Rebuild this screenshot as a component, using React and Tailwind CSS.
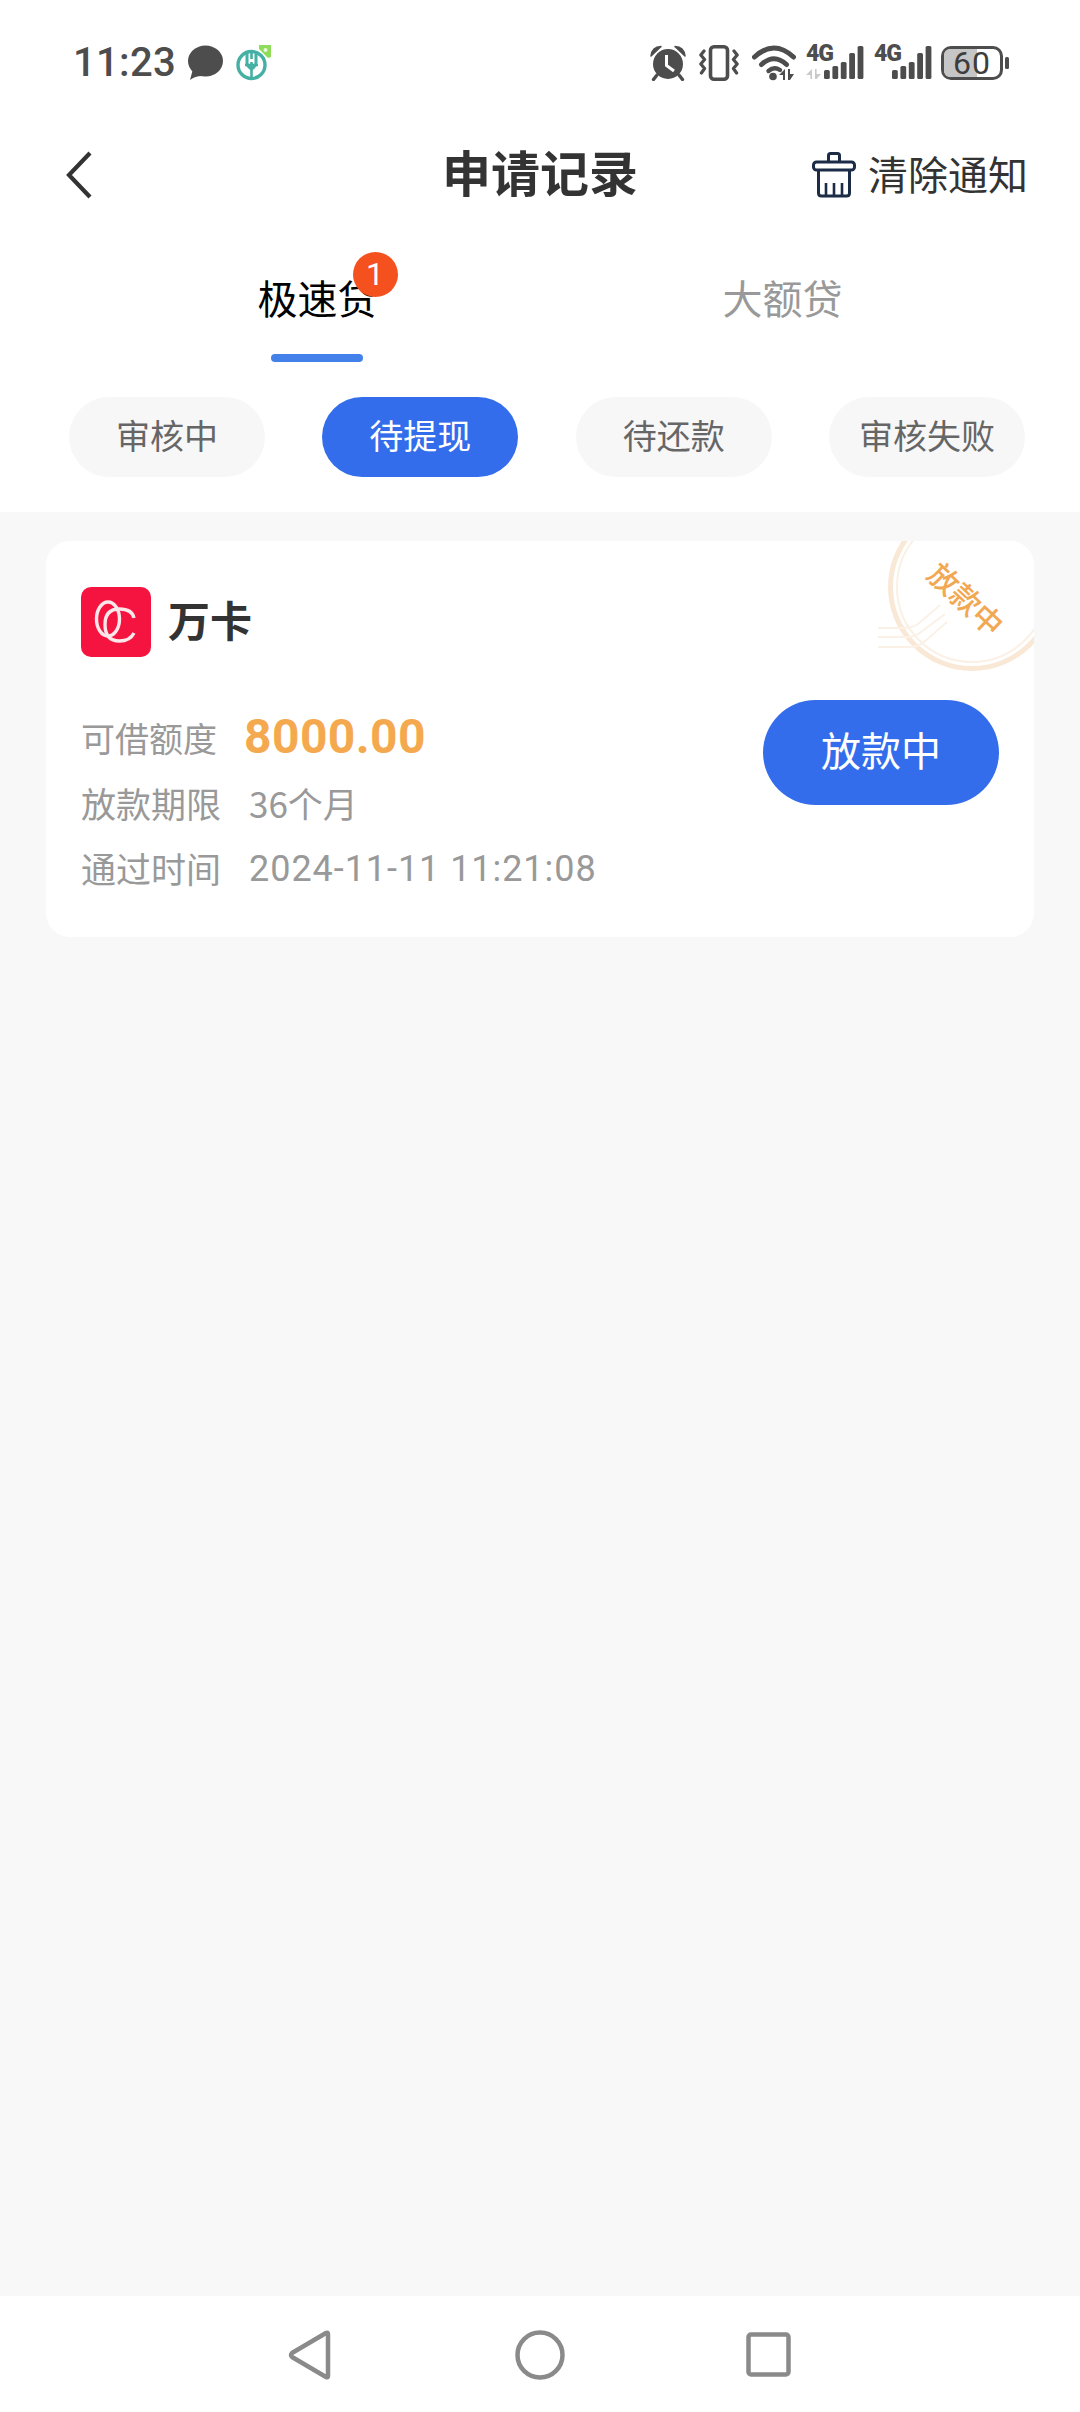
import React from "react";

const CJK = '"Noto Sans CJK SC", "Noto Sans", sans-serif';

function ChatIcon() {
  return (
    <svg width="36" height="36" viewBox="0 0 36 36" className="shrink-0">
      <ellipse cx="18.5" cy="16" rx="17.5" ry="15.5" fill="#4d4d4d" />
      <path d="M3 35 L6 24 L15 31 Q8 31 3 35 Z" fill="#4d4d4d" />
    </svg>
  );
}

function BankIcon() {
  return (
    <svg width="36" height="36" viewBox="0 0 36 36" className="shrink-0">
      <circle cx="15.5" cy="20" r="13.5" fill="none" stroke="#45b0a4" strokeWidth="3.4" />
      <path d="M11 6 V18 Q11 21 15.5 24 Q20 21 20 18 V6" fill="none" stroke="#45b0a4" strokeWidth="3" />
      <path d="M15.5 5 V14 M9 20 H22 M15.5 17 V34" stroke="#45b0a4" strokeWidth="2.6" />
      <path d="M23 0 H35 V12 L32 13 L23 4 Z" fill="#8fdc5a" />
      <circle cx="29.5" cy="5" r="2" fill="#e8f8df" />
    </svg>
  );
}

function AlarmIcon() {
  return (
    <svg width="36" height="36" viewBox="0 0 36 36" className="shrink-0">
      <circle cx="18" cy="19" r="15" fill="#4d4d4d" />
      <path d="M1 11 Q2 2 11 1.5 Z M35 11 Q34 2 25 1.5 Z" fill="#4d4d4d" stroke="#4d4d4d" strokeWidth="1.5" strokeLinejoin="round" />
      <path d="M7 30 L3.5 34.5 M29 30 L32.5 34.5" stroke="#4d4d4d" strokeWidth="3.4" strokeLinecap="round" />
      <path d="M16.5 10 V20.5 L24 26" fill="none" stroke="#fff" strokeWidth="3" />
    </svg>
  );
}

function VibrateIcon() {
  return (
    <svg width="40" height="36" viewBox="0 0 40 36" className="shrink-0">
      <rect x="11.5" y="1.8" width="17" height="32.4" rx="3.5" fill="none" stroke="#4d4d4d" strokeWidth="3.6" />
      <path d="M5 6 L1.8 10 L5.6 14.5 L1.8 19 L5.6 23.5 L2.4 28 M35 6 L38.2 10 L34.4 14.5 L38.2 19 L34.4 23.5 L37.6 28" fill="none" stroke="#4d4d4d" strokeWidth="3.2" strokeLinejoin="round" strokeLinecap="round" />
    </svg>
  );
}

function WifiIcon() {
  return (
    <svg width="45" height="36" viewBox="0 0 45 36" className="shrink-0">
      <path d="M2.5 12 Q22 -6 41.5 12" fill="none" stroke="#4d4d4d" strokeWidth="5" strokeLinecap="round" />
      <path d="M9.5 19.5 Q22 8 34.5 19.5" fill="none" stroke="#4d4d4d" strokeWidth="5" strokeLinecap="round" />
      <path d="M16.5 26 Q22 21 28 25" fill="none" stroke="#4d4d4d" strokeWidth="4.4" strokeLinecap="round" />
      <circle cx="21" cy="31.5" r="3.8" fill="#4d4d4d" />
      <path d="M33 24 V35 H31 V30 L27 30 Z M36 24 L36 35 L38 35 L42 29 L38 29 L38 24 Z" fill="#4d4d4d" />
    </svg>
  );
}

function Bars({ arrows }) {
  const bars = [
    { x: 18, top: 24 },
    { x: 26.4, top: 20 },
    { x: 34.8, top: 16 },
    { x: 43.2, top: 7 },
    { x: 51.6, top: 0 },
  ];
  return (
    <svg width="58" height="34" viewBox="0 0 58 34" className="absolute left-0 top-0">
      {bars.map((b) => (
        <rect key={b.x} x={b.x} y={b.top} width="5.8" height={33 - b.top} rx="1.6" fill="#4d4d4d" />
      ))}
      {arrows && (
        <path d="M6 23 V33 H4.4 V29 L0 29 Z M9 23 V33 L10.6 33 L15 28 L10.6 28 V23 Z" fill="#c9c9c9" />
      )}
    </svg>
  );
}

function Signal({ arrows, width }) {
  return (
    <div className="relative h-[34px] shrink-0" style={{ width }}>
      <div className="absolute bottom-0 right-0 w-[58px] h-[34px]">
        <Bars arrows={arrows} />
      </div>
      <span className="absolute left-0 top-[-4px] text-[23px] leading-[24px] tracking-[-1px] font-black text-[#4d4d4d] font-['Roboto']">4G</span>
    </div>
  );
}

function Battery() {
  return (
    <div className="relative flex items-center w-[68px] h-[34px] shrink-0">
      <div className="relative w-[62px] h-[34px] rounded-[10px] border-[3.5px] border-[#4d4d4d] flex items-center justify-center">
        <div className="absolute left-0 top-0 bottom-0 w-[33px] rounded-l-[6px] bg-[#c6c6c6]" />
        <span className="relative text-[32px] leading-[27px] tracking-[1px] text-[#3d3d3d] font-['Roboto']">60</span>
      </div>
      <div className="ml-[2px] w-[4px] h-[12px] rounded-[1.5px] bg-[#4d4d4d]" />
    </div>
  );
}

function ClearIcon() {
  return (
    <svg width="44" height="46" viewBox="0 0 44 46" className="shrink-0">
      <path d="M16.5 10 V3.5 Q16.5 1.5 18.5 1.5 H25.5 Q27.5 1.5 27.5 3.5 V10" fill="none" stroke="#1d2c46" strokeWidth="3" />
      <rect x="1.5" y="10" width="41" height="8" rx="3" fill="none" stroke="#1d2c46" strokeWidth="3" />
      <path d="M6.5 18 V41 Q6.5 44 9.5 44 H34.5 Q37.5 44 37.5 41 V18" fill="none" stroke="#1d2c46" strokeWidth="3" />
      <path d="M14 31 V44 M22 31 V44 M30 31 V44" stroke="#1d2c46" strokeWidth="2.6" />
    </svg>
  );
}

function Logo() {
  return (
    <div className="w-[70px] h-[70px] rounded-[10px] bg-[#f5143f] shrink-0">
      <svg width="70" height="70" viewBox="0 0 70 70">
        <ellipse cx="27" cy="32" rx="11.5" ry="17" fill="none" stroke="#fbe6ea" strokeWidth="3.4" />
        <path d="M53 31 Q51 22 38.5 22 Q24 22 24 37.5 Q24 54 38.5 54 Q49 54 53 46" fill="none" stroke="#fbe6ea" strokeWidth="3.4" />
      </svg>
    </div>
  );
}

function Stamp() {
  return (
    <div className="absolute right-0 top-0 w-[170px] h-[140px] pointer-events-none">
      <svg width="170" height="140" viewBox="864 542 170 140" className="absolute inset-0">
        <circle cx="972" cy="588" r="81.5" fill="none" stroke="#f9e8d6" strokeWidth="5" />
        <circle cx="972" cy="588" r="75" fill="none" stroke="#fbf0e4" strokeWidth="2" />
        <path d="M878 629 H904 Q912 629 918 625 L940 606 M878 638 H907 Q915 638 921 633 L945 615 M878 648 H910 Q918 648 924 643 L947 623" fill="none" stroke="#fbf1e6" strokeWidth="2" />
      </svg>
      <span
        className="absolute left-[45px] top-[39px] w-[116px] text-center text-[30px] leading-[36px] font-medium text-[#f2a853] rotate-[43deg]"
        style={{ fontFamily: CJK }}
      >
        放款中
      </span>
    </div>
  );
}

const PILLS = [
  { t: "审核中", on: false },
  { t: "待提现", on: true },
  { t: "待还款", on: false },
  { t: "审核失败", on: false },
];

export default function App() {
  return (
    <div className="w-[1080px] h-[2412px] flex flex-col bg-[#f8f8f8] overflow-hidden" style={{ fontFamily: CJK }}>
      <div className="bg-white h-[512px] shrink-0 flex flex-col">
        {/* status bar */}
        <div className="h-[126px] shrink-0 flex items-center pl-[73px] pr-[71px]">
          <span className="text-[40px] leading-[48px] font-medium font-['Roboto'] tracking-[0.3px] text-[#4d4d4d]">11:23</span>
          <div className="ml-[11px]"><ChatIcon /></div>
          <div className="ml-[13px]"><BankIcon /></div>
          <div className="ml-auto flex items-center">
            <AlarmIcon />
            <div className="ml-[13px]"><VibrateIcon /></div>
            <div className="ml-[13px]"><WifiIcon /></div>
            <div className="ml-[9px]"><Signal arrows width={58} /></div>
            <div className="ml-[10px]"><Signal width={58} /></div>
            <div className="ml-[9px]"><Battery /></div>
          </div>
        </div>
        {/* title bar */}
        <div className="h-[98px] shrink-0 grid grid-cols-[1fr_auto_1fr] items-center">
          <div className="pl-[66px] flex items-center">
            <svg width="26" height="48" viewBox="0 0 26 48">
              <path d="M24 2 L3 24 L24 46" fill="none" stroke="#333333" strokeWidth="4.2" />
            </svg>
          </div>
          <div className="text-[49px] leading-[60px] font-bold text-[#333333] pb-[8px]">申请记录</div>
          <div className="flex items-center justify-end pr-[52px]">
            <ClearIcon />
            <span className="ml-[12px] text-[40px] leading-[50px] text-[#333333] pb-[5px]">清除通知</span>
          </div>
        </div>
        {/* tabs */}
        <div className="grid grid-cols-[465px_465px] pl-[85px] pt-[45px] shrink-0">
          <div className="flex flex-col items-center relative">
            <div className="relative text-[40px] leading-[56px] text-black">
              极速贷
              <span className="absolute left-[95px] top-[-17px] w-[45px] h-[45px] rounded-full bg-[#f4511f] text-white text-[32px] leading-[45px] text-center font-['Roboto']">1</span>
            </div>
            <div className="mt-[29px] w-[92px] h-[8px] rounded-full bg-[#4480ea] -translate-x-[1px]" />
          </div>
          <div className="flex flex-col items-center">
            <div className="text-[40px] leading-[56px] text-[#999999]">大额贷</div>
          </div>
        </div>
        {/* pills */}
        <div className="mt-[35px] pl-[69px] pr-[55px] flex justify-between shrink-0">
          {PILLS.map((p) => (
            <div
              key={p.t}
              className={
                p.on
                  ? "w-[196px] h-[80px] pb-[6px] rounded-full bg-[#336deb] text-white text-[34px] flex items-center justify-center"
                  : "w-[196px] h-[80px] pb-[6px] rounded-full bg-[#f7f7f7] text-[#666666] text-[34px] flex items-center justify-center"
              }
            >
              {p.t}
            </div>
          ))}
        </div>
      </div>

      <div className="flex-1 min-h-0">
        <div className="relative mt-[29px] mx-[46px] h-[396px] rounded-[24px] bg-white overflow-hidden flex justify-between pl-[35px] pr-[35px] pt-[46px]">
          <Stamp />
          <div className="flex flex-col">
            <div className="flex items-center h-[70px]">
              <Logo />
              <span className="ml-[17px] text-[42px] leading-[50px] font-bold text-[#333333] pb-[6px]">万卡</span>
            </div>
            <div className="mt-[44px] h-[72px] flex items-center">
              <span className="text-[34px] text-[#999999]">可借额度</span>
              <span className="ml-[27px] text-[48px] font-bold text-[#f5a94f] font-['Roboto'] tracking-[0.4px]">8000.00</span>
            </div>
            <div className="h-[60px] flex items-center">
              <span className="text-[35px] text-[#999999]">放款期限</span>
              <span className="ml-[28px] text-[35px] text-[#999999]">36个月</span>
            </div>
            <div className="h-[71px] flex items-center">
              <span className="text-[35px] text-[#999999]">通过时间</span>
              <span className="ml-[28px] text-[36px] text-[#999999] font-['Roboto'] tracking-[0.95px]">2024-11-11 11:21:08</span>
            </div>
          </div>
          <div className="relative self-start mt-[113px] w-[236px] h-[105px] pb-[8px] rounded-full bg-[#336deb] text-white text-[40px] flex items-center justify-center">
            放款中
          </div>
        </div>
      </div>

      {/* nav bar */}
      <div className="h-[116px] shrink-0 bg-white flex items-center justify-center pt-[1px] pr-[1px]">
        <svg width="44" height="50" viewBox="0 0 44 50">
          <path d="M40 4 L40 46 Q40 48 38 47 L4 27 Q2 25 4 23 L38 3 Q40 2 40 4 Z" fill="none" stroke="#8a8a8a" strokeWidth="4.5" strokeLinejoin="round" />
        </svg>
        <svg width="50" height="50" viewBox="0 0 50 50" className="ml-[183px]">
          <circle cx="25" cy="25" r="22.5" fill="none" stroke="#8a8a8a" strokeWidth="4.5" />
        </svg>
        <svg width="45" height="45" viewBox="0 0 45 45" className="ml-[181px]">
          <rect x="2.5" y="2.5" width="40" height="40" rx="2.5" fill="none" stroke="#8a8a8a" strokeWidth="4.5" />
        </svg>
      </div>
    </div>
  );
}
